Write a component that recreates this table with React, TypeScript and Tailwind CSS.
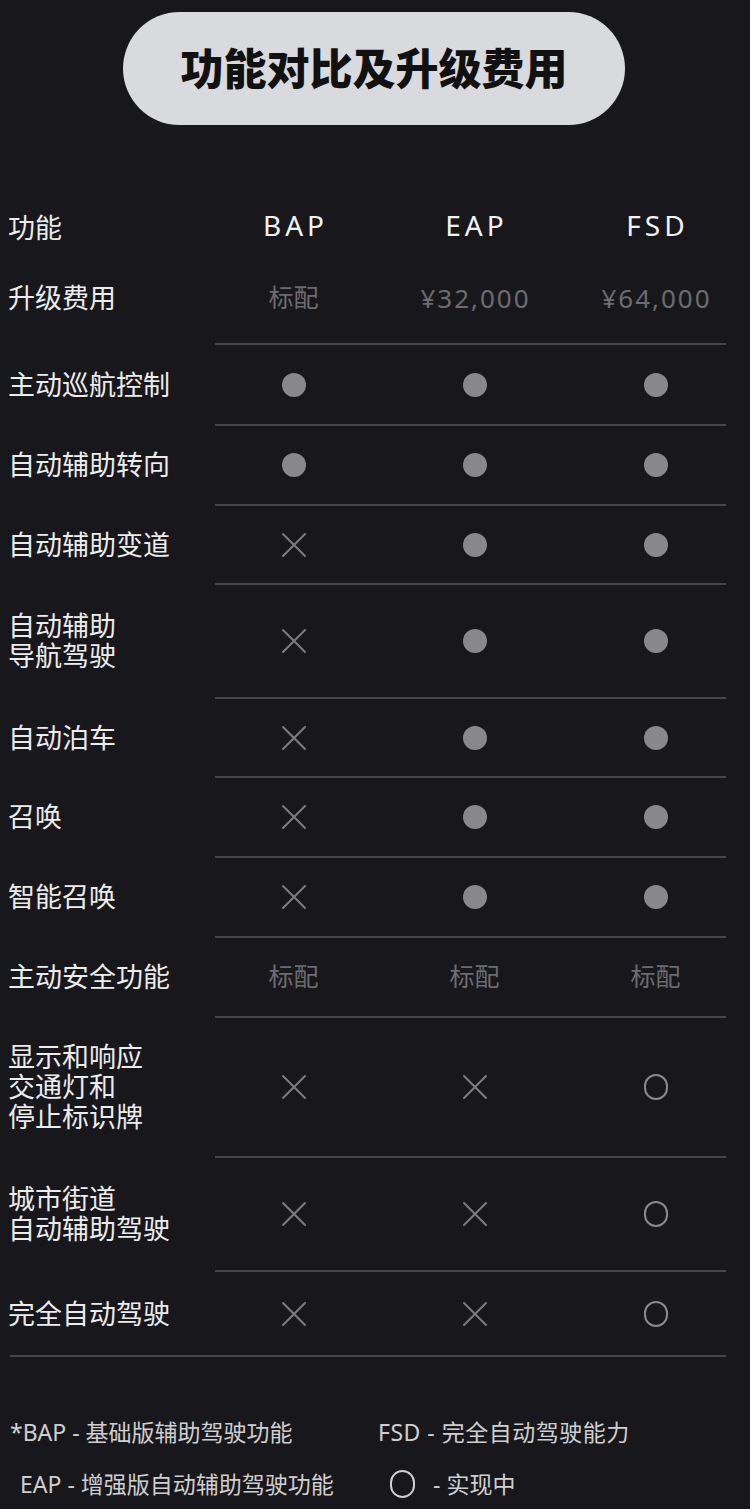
import React from "react";

type Cell = "dot" | "x" | "o" | string;

const rows: { label: string[]; h: number; cells: Cell[] }[] = [
  { label: ["主动巡航控制"], h: 79, cells: ["dot", "dot", "dot"] },
  { label: ["自动辅助转向"], h: 78, cells: ["dot", "dot", "dot"] },
  { label: ["自动辅助变道"], h: 77, cells: ["x", "dot", "dot"] },
  { label: ["自动辅助", "导航驾驶"], h: 112, cells: ["x", "dot", "dot"] },
  { label: ["自动泊车"], h: 77, cells: ["x", "dot", "dot"] },
  { label: ["召唤"], h: 78, cells: ["x", "dot", "dot"] },
  { label: ["智能召唤"], h: 78, cells: ["x", "dot", "dot"] },
  { label: ["主动安全功能"], h: 78, cells: ["标配", "标配", "标配"] },
  { label: ["显示和响应", "交通灯和", "停止标识牌"], h: 138, cells: ["x", "x", "o"] },
  { label: ["城市街道", "自动辅助驾驶"], h: 112, cells: ["x", "x", "o"] },
  { label: ["完全自动驾驶"], h: 83, cells: ["x", "x", "o"] },
];

const heights: Record<number, string> = {
  77: "h-[77px]",
  78: "h-[78px]",
  79: "h-[79px]",
  83: "h-[83px]",
  112: "h-[112px]",
  138: "h-[138px]",
};

function Mark({ c }: { c: Cell }) {
  if (c === "dot") return <div className="w-[24px] h-[24px] rounded-full bg-[#88888c]" />;
  if (c === "o") return <div className="w-[24px] h-[26px] rounded-full border-2 border-[#8a8a8e]" />;
  if (c === "x")
    return (
      <svg width="26" height="26" viewBox="0 0 26 26">
        <path d="M2 2 L24 24 M24 2 L2 24" stroke="#7c7c80" strokeWidth="2" strokeLinecap="round" />
      </svg>
    );
  return <span className="text-[25px] text-[#6c6c70]">{c}</span>;
}

function Divider({ full }: { full?: boolean }) {
  return <div className={`${full ? "ml-[10px] w-[716px]" : "ml-[215px] w-[511px]"} h-[2px] bg-[#46464a]`} />;
}

export default function App() {
  return (
    <div
      className="w-[750px] h-[1509px] bg-[#18181c] text-[#ececec] overflow-hidden"
      style={{ fontFamily: '"Noto Sans", "Noto Sans CJK SC", sans-serif' }}
    >
      <div className="pt-[12px] pl-[123px]">
        <div className="w-[502px] h-[113px] rounded-full bg-[#d9dadd] flex items-center justify-center">
          <span className="text-[43px] font-extrabold text-[#111] leading-none">功能对比及升级费用</span>
        </div>
      </div>

      <div className="mt-[68px] flex h-[70px] items-center pl-[8px]">
        <div className="w-[195px] text-[27px]">功能</div>
        {["BAP", "EAP", "FSD"].map((t) => (
          <div key={t} className="w-[181px] flex justify-center -mt-[6px] text-[28px] tracking-[4px] pl-[4px] text-[#f2f2f2]">
            {t}
          </div>
        ))}
      </div>
      <div className="flex h-[70px] items-center pl-[8px]">
        <div className="w-[195px] text-[27px]">升级费用</div>
        <div className="w-[181px] flex justify-center text-[25px] text-[#6c6c70]">标配</div>
        <div className="w-[181px] flex justify-center text-[26px] text-[#6c6c70] tracking-[2px] pl-[2px]">¥32,000</div>
        <div className="w-[181px] flex justify-center text-[26px] text-[#6c6c70] tracking-[2px] pl-[2px]">¥64,000</div>
      </div>
      <div className="h-[10px]" />
      <Divider />
      {rows.map((r, i) => (
        <React.Fragment key={i}>
          <div className={`flex items-center pl-[8px] ${heights[r.h]}`}>
            <div className="w-[195px] text-[27px] leading-[30px]">
              {r.label.map((l) => (
                <div key={l} className="h-[30px]">{l}</div>
              ))}
            </div>
            {r.cells.map((c, j) => (
              <div key={j} className="w-[181px] flex justify-center items-center">
                <Mark c={c} />
              </div>
            ))}
          </div>
          <Divider full={i === rows.length - 1} />
        </React.Fragment>
      ))}

      <div className="mt-[60px] pl-[10px] text-[23px] text-[#cfcfcf] leading-[30px]">
        <div className="flex">
          <div className="w-[368px]">*BAP - 基础版辅助驾驶功能</div>
          <div className="tracking-[0.5px]">FSD - 完全自动驾驶能力</div>
        </div>
        <div className="flex mt-[22px] items-center">
          <div className="w-[368px] pl-[10px]">EAP - 增强版自动辅助驾驶功能</div>
          <div className="ml-[12px] w-[25px] h-[28px] rounded-full border-2 border-[#d0d0d0]" />
          <div className="ml-[18px]">- 实现中</div>
        </div>
      </div>
    </div>
  );
}
